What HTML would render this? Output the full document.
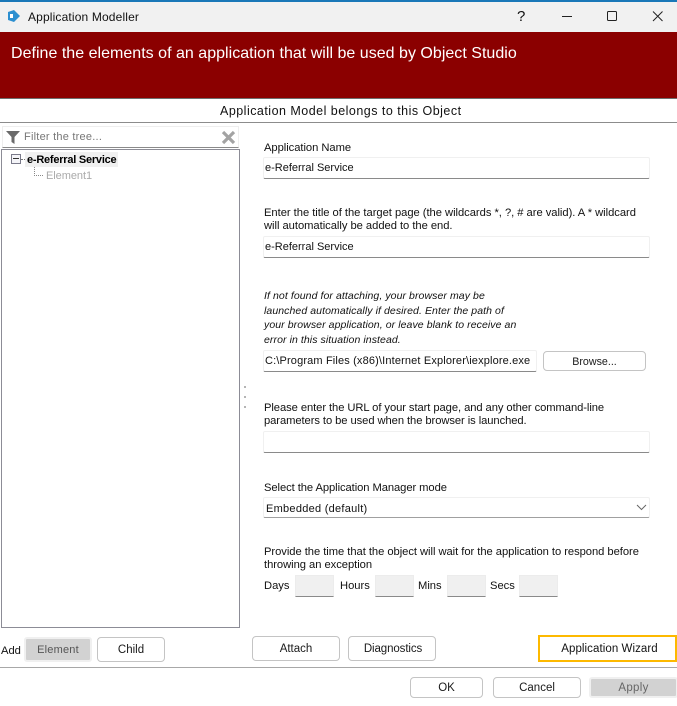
<!DOCTYPE html>
<html><head><meta charset="utf-8"><style>
html,body{margin:0;padding:0;background:#fff}
#p{position:relative;width:677px;height:706px;overflow:hidden;background:#fff;font-family:"Liberation Sans",sans-serif;font-size:11.2px;color:#111}
.a,.t{position:absolute;box-sizing:border-box}
.t{white-space:nowrap;line-height:14px}
.i{position:absolute;box-sizing:border-box;background:#fff;border:1px solid #f0f0f0;border-bottom:1px solid #8a8a8a;border-radius:2px;left:263px;width:387px}
.b{position:absolute;box-sizing:border-box;background:#fff;border:1px solid #c4c4c4;border-radius:4px;text-align:center;font-size:11.5px;color:#1a1a1a}
.s{position:absolute;box-sizing:border-box;background:#f0f0f0;border:1px solid #ececec;border-bottom:1px solid #8a8a8a;width:39px;height:22px;top:575px}
.v{font-size:11px}
.e{font-size:10.5px;font-style:italic;letter-spacing:.08px}
</style></head><body><div id="p">
<div class="a" style="left:0;top:0;width:677px;height:2px;background:#1a78b8"></div>
<div class="a" style="left:0;top:2px;width:677px;height:30px;background:#f1f1f1"></div>
<svg class="a" style="left:7px;top:9px" width="14" height="14" viewBox="0 0 14 14"><path d="M1 3L7 1L13 7L7 13L1 11Z" fill="#2c8fd0"/><rect x="3" y="5" width="3" height="4" fill="#fff"/></svg>
<div class="t" style="left:28px;top:10px;font-size:12px;letter-spacing:.15px">Application Modeller</div>
<div class="t" style="left:517px;top:8px;font-size:15px;line-height:18px">?</div>
<svg class="a" style="left:560px;top:8px" width="110" height="16" viewBox="0 0 110 16" fill="none" stroke="#222" stroke-width="1"><path d="M2 8.500H12"/><rect x="47.500" y="3.500" width="9" height="9" rx="1"/><path d="M93 3.500L102.500 13M102.500 3.500L93 13"/></svg>

<div class="a" style="left:0;top:32px;width:677px;height:67px;background:#8b0000;border-bottom:1px solid #6e6e6e"></div>
<div class="t" style="left:11px;top:44px;color:#fff;font-size:16px;line-height:20px;letter-spacing:.02px">Define the elements of an application that will be used by Object Studio</div>
<div class="t" style="left:220px;top:104px;font-size:12.5px;letter-spacing:.48px">Application Model belongs to this Object</div>
<div class="a" style="left:0;top:122px;width:677px;height:1px;background:#8c8c8c"></div>

<div class="a" style="left:2px;top:126px;width:237px;height:22px;background:#fff;border:1px solid #eee;border-bottom:1px solid #8a8a8a"></div>
<svg class="a" style="left:6px;top:130px" width="14" height="14" viewBox="0 0 14 14"><path d="M0 1H14L8.500 7V14L5.500 12V7Z" fill="#6a6a6a"/></svg>
<div class="t" style="left:24px;top:130px;font-size:11px;letter-spacing:.23px;color:#777">Filter the tree...</div>
<svg class="a" style="left:221px;top:130px" width="15" height="15" viewBox="0 0 15 15"><path d="M2 2L13 13M13 2L2 13" stroke="#a3a3a3" stroke-width="3.200"/></svg>

<div class="a" style="left:1px;top:149px;width:239px;height:479px;border:1px solid #8c8c96;background:#fff"></div>
<div class="a" style="left:25px;top:152px;width:93px;height:15px;background:#f0f0f0"></div>
<div class="a" style="left:11px;top:154px;width:10px;height:10px;border:1px solid #7a7a8a;background:#f4f4f8"></div>
<div class="a" style="left:13px;top:158px;width:6px;height:1px;background:#333"></div>
<div class="a" style="left:21px;top:159px;width:4px;border-top:1px dotted #777"></div>
<div class="a" style="left:34px;top:167px;width:9px;height:9px;border-left:1px dotted #888;border-bottom:1px dotted #888"></div>
<div class="t" style="left:27px;top:153px;font-size:11px;font-weight:bold;letter-spacing:-.23px;color:#000">e-Referral Service</div>
<div class="t" style="left:46px;top:169px;font-size:11px;letter-spacing:-.05px;color:#aaa">Element1</div>

<div class="t" style="left:264px;top:141px;letter-spacing:-.04px">Application Name</div>
<div class="i" style="top:157px;height:22px"></div>
<div class="t v" style="left:265px;top:161px">e-Referral Service</div>

<div class="t" style="left:264px;top:206px;letter-spacing:-.03px">Enter the title of the target page (the wildcards *, ?, # are valid). A * wildcard</div>
<div class="t" style="left:264px;top:219px;letter-spacing:-.03px">will automatically be added to the end.</div>
<div class="i" style="top:236px;height:22px"></div>
<div class="t v" style="left:265px;top:240px">e-Referral Service</div>

<div class="t e" style="left:264px;top:289px">If not found for attaching, your browser may be</div>
<div class="t e" style="left:264px;top:304px">launched automatically if desired. Enter the path of</div>
<div class="t e" style="left:264px;top:318px">your browser application, or leave blank to receive an</div>
<div class="t e" style="left:264px;top:333px">error in this situation instead.</div>
<div class="i" style="top:350px;height:22px;width:274px"></div>
<div class="t v" style="left:265px;top:354px;letter-spacing:.15px">C:\Program Files (x86)\Internet Explorer\iexplore.exe</div>
<div class="b" style="left:543px;top:351px;width:103px;height:20px;line-height:20px;font-size:10.7px">Browse...</div>

<div class="a" style="left:244px;top:386px;width:2px;height:2px;background:#b5b5b5"></div>
<div class="a" style="left:244px;top:396px;width:2px;height:2px;background:#b5b5b5"></div>
<div class="a" style="left:244px;top:406px;width:2px;height:2px;background:#b5b5b5"></div>

<div class="t" style="left:264px;top:401px;letter-spacing:-.07px">Please enter the URL of your start page, and any other command-line</div>
<div class="t" style="left:264px;top:414px;letter-spacing:-.07px">parameters to be used when the browser is launched.</div>
<div class="i" style="top:431px;height:22px"></div>

<div class="t" style="left:264px;top:481px;letter-spacing:-.07px">Select the Application Manager mode</div>
<div class="i" style="top:497px;height:21px;border-bottom-color:#a0a0a0"></div>
<div class="t v" style="left:266px;top:502px;letter-spacing:.27px">Embedded (default)</div>
<svg class="a" style="left:636px;top:504px" width="11" height="7" viewBox="0 0 11 7"><path d="M1 1L5.500 5.500L10 1" fill="none" stroke="#666"/></svg>

<div class="t" style="left:264px;top:545px;letter-spacing:-.04px">Provide the time that the object will wait for the application to respond before</div>
<div class="t" style="left:264px;top:558px;letter-spacing:-.04px">throwing an exception</div>
<div class="t" style="left:264px;top:579px">Days</div>
<div class="s" style="left:295px"></div>
<div class="t" style="left:340px;top:579px">Hours</div>
<div class="s" style="left:375px"></div>
<div class="t" style="left:418px;top:579px">Mins</div>
<div class="s" style="left:447px"></div>
<div class="t" style="left:490px;top:579px">Secs</div>
<div class="s" style="left:519px"></div>

<div class="t" style="left:1px;top:644px;font-size:11.2px">Add</div>
<div class="a" style="left:24px;top:637px;width:68px;height:25px;background:#d2d2d2;border:2px solid #f0f0f0;border-radius:3px"></div>
<div class="t" style="left:24px;top:643px;width:68px;text-align:center;font-size:11px;letter-spacing:.2px;color:#555">Element</div>
<div class="b" style="left:97px;top:637px;width:68px;height:25px;line-height:24px">Child</div>
<div class="b" style="left:252px;top:636px;width:88px;height:25px;line-height:24px">Attach</div>
<div class="b" style="left:348px;top:636px;width:88px;height:25px;line-height:24px;letter-spacing:-.1px;padding-left:2px">Diagnostics</div>
<div class="a" style="left:538px;top:635px;width:139px;height:27px;border:2px solid #fdb900;background:#fff"></div>
<div class="t" style="left:540px;top:642px;width:139px;text-align:center;font-size:11.5px;letter-spacing:.07px">Application Wizard</div>

<div class="a" style="left:0;top:667px;width:677px;height:1px;background:#a8a8a8"></div>
<div class="b" style="left:410px;top:677px;width:73px;height:21px;line-height:20px">OK</div>
<div class="b" style="left:493px;top:677px;width:88px;height:21px;line-height:20px">Cancel</div>
<div class="a" style="left:589px;top:677px;width:89px;height:21px;background:#d2d2d2;border:2px solid #f0f0f0;border-radius:3px"></div>
<div class="t" style="left:589px;top:681px;width:89px;text-align:center;font-size:11.5px;letter-spacing:.3px;color:#666">Apply</div>
</div></body></html>
